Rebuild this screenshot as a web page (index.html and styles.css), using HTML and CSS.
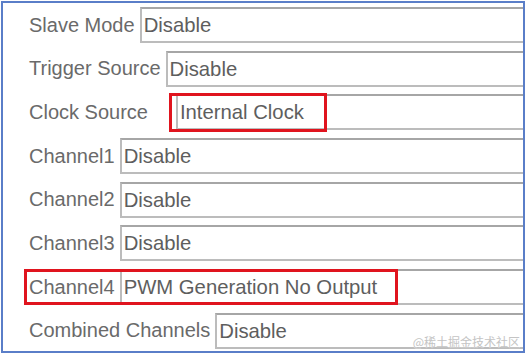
FILE: index.html
```html
<!DOCTYPE html>
<html lang="en">
<head>
    <meta charset="UTF-8">
    <title>TIM Mode</title>
    <link rel="stylesheet" href="styles.css">
</head>
<body>

<div class="panel">
    <div class="row">
        <span class="label">Slave Mode</span>
        <div class="field">Disable</div>
    </div>
    <div class="row">
        <span class="label">Trigger Source</span>
        <div class="field">Disable</div>
    </div>
    <div class="row">
        <span class="label">Clock Source</span>
        <div class="field field-wide-gap">Internal Clock</div>
        <div class="mark mark-clock"></div>
    </div>
    <div class="row">
        <span class="label">Channel1</span>
        <div class="field">Disable</div>
    </div>
    <div class="row">
        <span class="label">Channel2</span>
        <div class="field">Disable</div>
    </div>
    <div class="row">
        <span class="label">Channel3</span>
        <div class="field">Disable</div>
    </div>
    <div class="row">
        <span class="label">Channel4</span>
        <div class="field">PWM Generation No Output</div>
        <div class="mark mark-ch4"></div>
    </div>
    <div class="row">
        <span class="label">Combined Channels</span>
        <div class="field">Disable</div>
    </div>

    <span class="watermark">@稀土掘金技术社区</span>
</div>

</body>
</html>
```

FILE: styles.css
```css
body {
    margin: 0;
    background: #ffffff;
    font-family: "Liberation Sans", Arial, sans-serif;
}
.panel {
    position: relative;
    margin: 1px;
    width: 524px;
    height: 352px;
    box-sizing: border-box;
    border: 2px solid #5a7ec8;
    padding: 4px 0 0 26px;
    display: flex;
    flex-direction: column;
    gap: 7.7px;
    overflow: hidden;
    background: #fff;
}
.row {
    position: relative;
    display: flex;
    align-items: center;
    height: 36px;
    flex: none;
}
.label {
    font-size: 20px;
    color: #6a6a6a;
    margin-right: 5px;
    white-space: nowrap;
}
.field {
    flex: 1;
    height: 36px;
    box-sizing: border-box;
    border: 2px solid #bcbcbc;
    border-top-color: #a6a6a6;
    border-right: none;
    padding: 0 2px;
    font-size: 20.3px;
    color: #5e5e5e;
    line-height: 32px;
    white-space: nowrap;
}
.field-wide-gap {
    margin-left: 23px;
}
.mark {
    position: absolute;
    border: 3px solid #e0141e;
    box-sizing: border-box;
}
.mark-clock {
    left: 140px;
    top: -1px;
    width: 158px;
    height: 39px;
}
.mark-ch4 {
    left: -5px;
    top: 0px;
    width: 374px;
    height: 36px;
}
.watermark {
    position: absolute;
    right: 3px;
    bottom: 1px;
    font-family: "Noto Sans CJK SC", sans-serif;
    font-size: 12px;
    color: #c4c4c4;
    text-shadow: 0 0 1px #fff;
}
```
